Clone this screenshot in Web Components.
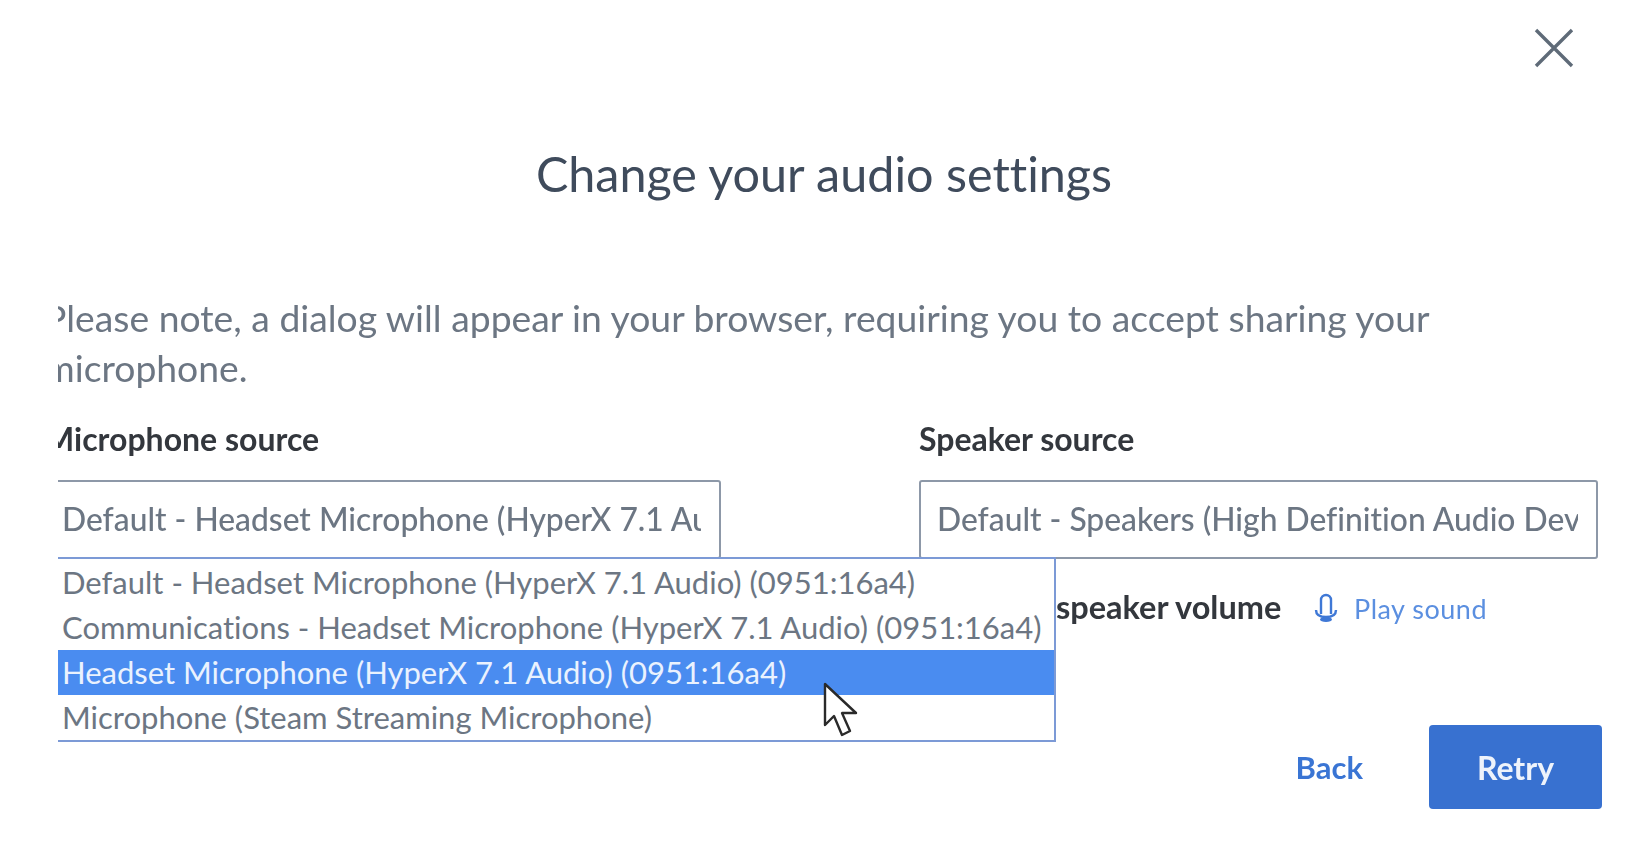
<!DOCTYPE html>
<html lang="en">
<head>
<meta charset="utf-8">
<title>Change your audio settings</title>
<style>
  html, body { margin: 0; height: 100%; background: #fff; overflow: hidden; }
</style>
</head>
<body>
<audio-dialog>
  <field-block slot="mic" label="Microphone source">
    <source-select value="Default - Headset Microphone (HyperX 7.1 Audio) (0951:16a4)"></source-select>
    <source-menu>
      <menu-option>Default - Headset Microphone (HyperX 7.1 Audio) (0951:16a4)</menu-option>
      <menu-option>Communications - Headset Microphone (HyperX 7.1 Audio) (0951:16a4)</menu-option>
      <menu-option selected>Headset Microphone (HyperX 7.1 Audio) (0951:16a4)</menu-option>
      <menu-option>Microphone (Steam Streaming Microphone)</menu-option>
    </source-menu>
  </field-block>
  <field-block slot="speaker" label="Speaker source">
    <source-select value="Default - Speakers (High Definition Audio Device)"></source-select>
    <volume-test></volume-test>
  </field-block>
</audio-dialog>

<script>
const FONT = `'Lato', 'Noto Sans', sans-serif`;

class AudioDialog extends HTMLElement {
  static get is() {
    return 'audio-dialog';
  }
  connectedCallback() {
    this.attachShadow({ mode: 'open' }).innerHTML = `
      <style>
        :host { display: flex; flex-direction: column; height: 842px; font-family: ${FONT}; font-variant-ligatures: none; filter: blur(.5px); }
        .top { display: flex; justify-content: flex-end; padding: 28px 74px 0 0; height: 40px; }
        .top svg { width: 40px; height: 40px; display: block; }
        h2 { margin: 0; padding-top: 73px; height: 64px; font-size: 48.5px; line-height: 64px; font-weight: 400; color: #3f4b5c; text-align: center; }
        .clip { margin: 0 0 0 58px; overflow: hidden; flex: 1; }
        .inner { margin-left: -14px; }
        p { margin: 0; padding-top: 88px; max-width: 1420px; font-size: 37.3px; line-height: 50px; color: #6c7683; }
        .fields { display: grid; grid-template-columns: 677px 679px; column-gap: 198px; margin-top: 26px; }
        .actions { display: flex; justify-content: flex-end; align-items: center; gap: 66px; margin-top: 48px; padding-right: 46px; }
        .back { font-size: 31px; font-weight: 700; color: #3a75d4; }
        .retry { width: 173px; height: 84px; display: flex; align-items: center; justify-content: center; background: #3871d0; border-radius: 4px; color: #eef3fb; font-size: 32px; font-weight: 700; }
        .cursor { position: absolute; left: 823px; top: 682px; z-index: 3; }
      </style>
      <div class="top">
        <svg viewBox="0 0 40 40"><path d="M2 2 38 38M38 2 2 38" stroke="#5f6b78" stroke-width="3.4" fill="none"/></svg>
      </div>
      <h2>Change your audio settings</h2>
      <div class="clip">
        <div class="inner">
          <p>Please note, a dialog will appear in your browser, requiring you to accept sharing your microphone.</p>
          <div class="fields"><slot name="mic"></slot><slot name="speaker"></slot></div>
          <div class="actions"><span class="back">Back</span><span class="retry">Retry</span></div>
        </div>
      </div>
      <svg class="cursor" width="36" height="56" viewBox="0 0 36 56">
        <path d="M2 2V43L11 34 19 53 27 49 19 31H33Z" fill="#fff" stroke="#2a2a2a" stroke-width="2.4" stroke-linejoin="round"/>
      </svg>
    `;
  }
}

class FieldBlock extends HTMLElement {
  static get is() {
    return 'field-block';
  }
  connectedCallback() {
    this.attachShadow({ mode: 'open' }).innerHTML = `
      <style>
        :host { display: block; position: relative; height: 258px; }
        label { display: block; height: 40px; font-size: 32px; line-height: 40px; font-weight: 700; color: #33373d; margin-bottom: 21px; }
      </style>
      <label>${this.getAttribute('label') || ''}</label>
      <slot></slot>
    `;
  }
}

class SourceSelect extends HTMLElement {
  static get is() {
    return 'source-select';
  }
  connectedCallback() {
    this.attachShadow({ mode: 'open' }).innerHTML = `
      <style>
        :host { display: block; box-sizing: border-box; height: 79px; border: 2px solid #8d98a8; border-radius: 3px; padding: 0 18px 0 16px; }
        div { height: 75px; line-height: 75px; font-size: 31.8px; font-weight: 500; color: #6c7683; white-space: nowrap; overflow: hidden; }
      </style>
      <div>${this.getAttribute('value') || ''}</div>
    `;
  }
}

class SourceMenu extends HTMLElement {
  static get is() {
    return 'source-menu';
  }
  connectedCallback() {
    this.attachShadow({ mode: 'open' }).innerHTML = `
      <style>
        :host { display: block; position: absolute; left: 0; top: 138px; width: 1012px; box-sizing: border-box; height: 185px; padding-top: 1px; background: #fff; border: 2px solid #7c9ad6; z-index: 2; }
      </style>
      <slot></slot>
    `;
  }
}

class MenuOption extends HTMLElement {
  static get is() {
    return 'menu-option';
  }
  connectedCallback() {
    this.attachShadow({ mode: 'open' }).innerHTML = `
      <style>
        :host { display: block; height: 45px; line-height: 45px; padding-left: 16px; font-size: 31px; color: #6c7683; white-space: nowrap; }
        :host([selected]) { background: #4a8cf0; color: #eaf2fe; }
      </style>
      <slot></slot>
    `;
  }
}

class VolumeTest extends HTMLElement {
  static get is() {
    return 'volume-test';
  }
  connectedCallback() {
    this.attachShadow({ mode: 'open' }).innerHTML = `
      <style>
        :host { display: flex; align-items: center; padding: 29px 0 0 137px; height: 40px; }
        b { font-size: 32.5px; font-weight: 700; color: #33373d; width: 258px; white-space: nowrap; margin-bottom: 4px; }
        svg { width: 24px; height: 30px; margin-right: 16px; }
        span { font-size: 27px; color: #5b8fe0; letter-spacing: .5px; }
      </style>
      <b>speaker volume</b>
      <svg viewBox="0 0 24 30" fill="none" stroke="#3f78d6" stroke-width="2.4">
        <path d="M7 21V7a5 5 0 0 1 10 0v14"/>
        <path d="M2 17c0 5 4 7 10 7s10-2 10-7"/>
        <ellipse cx="12" cy="26.5" rx="6" ry="2.5" fill="#3f78d6" stroke="none"/>
      </svg>
      <span>Play sound</span>
    `;
  }
}

[AudioDialog, FieldBlock, SourceSelect, SourceMenu, MenuOption, VolumeTest].forEach(c => customElements.define(c.is, c));
</script>
</body>
</html>
